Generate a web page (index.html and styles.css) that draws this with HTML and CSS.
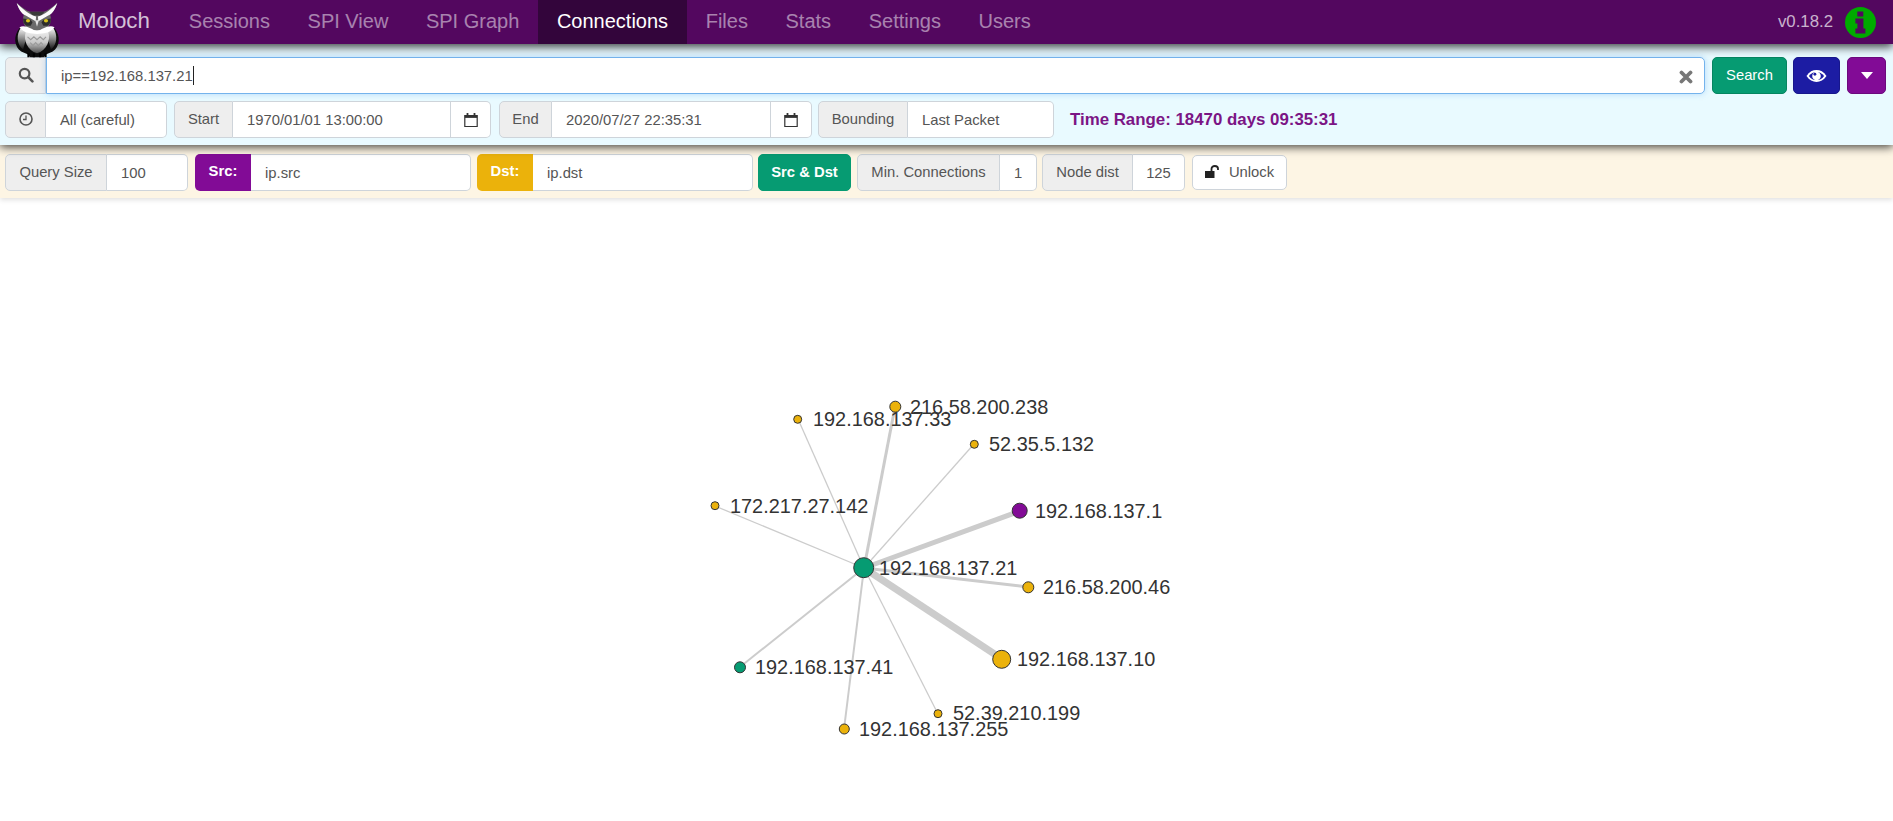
FILE: index.html
```html
<!DOCTYPE html>
<html lang="en">
<head>
<meta charset="utf-8">
<title>Moloch - Connections</title>
<link rel="stylesheet" href="styles.css">
</head>
<body>
<header class="navbar">
  <svg class="owl" viewBox="0 0 60 60" aria-hidden="true">
    <defs>
      <linearGradient id="belly" x1="0" y1="0" x2="0" y2="1"><stop offset="0" stop-color="#f6f6f6"/><stop offset=".55" stop-color="#c8c8c8"/><stop offset="1" stop-color="#4a4a4a"/></linearGradient>
      <linearGradient id="wing" x1="0" y1="0" x2="0" y2="1"><stop offset="0" stop-color="#fff"/><stop offset=".45" stop-color="#999"/><stop offset="1" stop-color="#161616"/></linearGradient>
    </defs>
    <g transform="translate(-.45 0) scale(.9 .97)">
      <path d="M11 29C4 37 5 48 13 53L20 56 23 59H38L41 56 48 53C56 48 57 37 50 29Z" fill="#0c0c0c"/>
      <path d="M13 28C7 35 8 46 15 51L19 38 23 32ZM48 28C54 35 53 46 46 51L42 38 38 32Z" fill="url(#wing)"/>
      <path d="M18 33C25 29 36 29 43 33 46 42 41 52 30.500 55 20 52 15 42 18 33Z" fill="url(#belly)"/>
      <path d="M20 38l3.500 3 3.500-3 3.500 3 3.500-3 3.500 3 3-3M23 44l3 3 3-3 3 3 3-3 2 2" fill="none" stroke="#9a9a9a" stroke-width="1.200"/>
      <path d="M8 3C10 9 13 13 16 15 14 20 15 25 19 29 26 32 35 32 42 29 46 25 47 20 45 15 48 13 51 9 53 3 47 8 42 11 38 12H23C19 11 14 8 8 3Z" fill="#6a6a6a"/>
      <path d="M22 12h17l-4 4h-9z" fill="#3a3a3a"/>
      <path d="M8 3C10 9 13 14 18 16L29 22 29.500 17C22 15 14 9 8 3ZM53 3C51 9 48 14 43 16L32 22 31.500 17C39 15 47 9 53 3Z" fill="#fbfbfb"/>
      <path d="M11 28C18 25 25 31 30.500 32 36 31 43 25 50 28 44 35 37 34 30.500 35 24 34 17 35 11 28Z" fill="#fff"/>
      <path d="M15 19l8 1 2.500 3-2 3.500h-5l-3-3z" fill="#2e2e2e"/><path d="M46 19l-8 1-2.500 3 2 3.500h5l3-3z" fill="#2e2e2e"/>
      <ellipse cx="20.500" cy="21.500" rx="2.300" ry="1.800" fill="#d9c41c"/><ellipse cx="40.500" cy="21.500" rx="2.300" ry="1.800" fill="#d9c41c"/>
      <path d="M28.500 21L30.500 27.500 32.500 21Z" fill="#e6e6e6"/>
      <path d="M21 55v4M27 55v4M34 55v4M40 55v4" stroke="#000" stroke-width="2.400"/>
    </g>
  </svg>
  <nav class="nav-items">
    <a class="brand">Moloch</a>
    <a class="nav-link">Sessions</a>
    <a class="nav-link">SPI View</a>
    <a class="nav-link">SPI Graph</a>
    <a class="nav-link active">Connections</a>
    <a class="nav-link">Files</a>
    <a class="nav-link">Stats</a>
    <a class="nav-link">Settings</a>
    <a class="nav-link">Users</a>
  </nav>
  <span class="version">v0.18.2</span>
  <span class="info-badge">
    <svg viewBox="0 0 31 31" aria-hidden="true"><circle cx="15.500" cy="15.500" r="15.500" fill="#00aa00"/><path d="M12.300 4.500h6v5h-6zM10.400 11.500h8v10h2v5h-10v-5h2v-5h-2z" fill="#53075f"/></svg>
  </span>
</header>

<section class="search-panel">
  <div class="row">
    <div class="group grow">
      <span class="addon w-search">
        <svg class="icon" viewBox="0 0 16 16" aria-hidden="true"><circle cx="6.600" cy="6.600" r="4.800" fill="none" stroke="#555" stroke-width="2.200"/><path d="M10.200 10.200l4.200 4.200" stroke="#555" stroke-width="2.600" stroke-linecap="round"/></svg>
      </span>
      <div class="field focus grow spread">
        <span class="query">ip==192.168.137.21<i class="caret-bar"></i></span>
        <svg class="clear" viewBox="0 0 14 14" aria-hidden="true"><path d="M2.500 2.500l9 9M11.500 2.500l-9 9" stroke="#777" stroke-width="3.800" stroke-linecap="round"/></svg>
      </div>
    </div>
    <button class="btn btn-green w-go">Search</button>
    <button class="btn btn-blue w-eye">
      <svg viewBox="0 0 22 14" width="21" height="14" aria-hidden="true"><path d="M.5 7C3.500 2.500 7 .8 11 .8S18.500 2.500 21.500 7C18.500 11.500 15 13.200 11 13.200S3.500 11.500 .5 7Z" fill="#fff"/><path d="M3 7C5.300 3.900 8 2.700 11 2.700S16.700 3.900 19 7C16.700 10.100 14 11.300 11 11.300S5.300 10.100 3 7Z" fill="#1c1ca3"/><circle cx="11" cy="7" r="4.500" fill="#fff"/><circle cx="9.300" cy="5.200" r="1.500" fill="#1c1ca3"/></svg>
    </button>
    <button class="btn btn-purple w-more">
      <svg viewBox="0 0 12 7" width="12" height="7" aria-hidden="true"><path d="M0 0h12L6 7z" fill="#fff"/></svg>
    </button>
  </div>
  <div class="row">
    <div class="group">
      <span class="addon w-clock">
        <svg class="icon" viewBox="0 0 16 16" aria-hidden="true"><circle cx="8" cy="8" r="6" fill="none" stroke="#555" stroke-width="1.600"/><path d="M8 4.500V8.500H5" fill="none" stroke="#555" stroke-width="1.300"/></svg>
      </span>
      <div class="field w-all">All (careful)</div>
    </div>
    <div class="group s1">
      <span class="addon w-start">Start</span>
      <div class="field w-date square">1970/01/01 13:00:00</div>
      <span class="cal">
        <svg class="icon" viewBox="0 0 16 16" aria-hidden="true"><path d="M1.800 3.500h12.400v11H1.800z" fill="none" stroke="#333" stroke-width="1.200"/><path d="M1.800 3.500h12.400v2.400H1.800z" fill="#333"/><path d="M4.500 1v3.500M11.500 1v3.500" stroke="#333" stroke-width="1.800"/></svg>
      </span>
    </div>
    <div class="group s2">
      <span class="addon w-end">End</span>
      <div class="field w-date2 square">2020/07/27 22:35:31</div>
      <span class="cal wide">
        <svg class="icon" viewBox="0 0 16 16" aria-hidden="true"><path d="M1.800 3.500h12.400v11H1.800z" fill="none" stroke="#333" stroke-width="1.200"/><path d="M1.800 3.500h12.400v2.400H1.800z" fill="#333"/><path d="M4.500 1v3.500M11.500 1v3.500" stroke="#333" stroke-width="1.800"/></svg>
      </span>
    </div>
    <div class="group">
      <span class="addon w-bound">Bounding</span>
      <div class="field w-last">Last Packet</div>
    </div>
    <strong class="time-range">Time Range: 18470 days 09:35:31</strong>
  </div>
</section>

<section class="options-panel">
  <div class="row">
    <div class="group">
      <span class="addon w-qs">Query Size</span>
      <div class="field w-100">100</div>
    </div>
    <div class="group s1">
      <span class="addon addon-src w-tag">Src:</span>
      <div class="field w-srcf">ip.src</div>
    </div>
    <div class="group s0b">
      <span class="addon addon-dst w-tag">Dst:</span>
      <div class="field w-dstf">ip.dst</div>
    </div>
    <button class="btn btn-green btn-bold w-both s0">Src &amp; Dst</button>
    <div class="group">
      <span class="addon w-min">Min. Connections</span>
      <div class="field w-one">1</div>
    </div>
    <div class="group s0">
      <span class="addon w-nd">Node dist</span>
      <div class="field w-125">125</div>
    </div>
    <button class="btn btn-white w-unlock s1">
      <svg viewBox="0 0 15 13" width="15" height="13" aria-hidden="true"><path d="M0 6h9.500v7H0z" fill="#222"/><path d="M6.500 6.500V3.800C6.500 2 8 1 9.800 1S13 2 13 3.800V5" fill="none" stroke="#222" stroke-width="1.800"/></svg>
      Unlock
    </button>
  </div>
</section>

<main class="graph-wrap">
  <svg class="graph" viewBox="0 198 1893 623" role="img" aria-label="Connections graph">
    <g class="links">
      <line class="l1" x1="864" y1="568" x2="798" y2="419"/>
      <line class="l3" x1="864" y1="568" x2="895" y2="407"/>
      <line class="l1" x1="864" y1="568" x2="974" y2="444"/>
      <line class="l1" x1="864" y1="568" x2="715" y2="506"/>
      <line class="l5" x1="864" y1="568" x2="1020" y2="511"/>
      <line class="l3" x1="864" y1="568" x2="1028" y2="587"/>
      <line class="l6" x1="864" y1="568" x2="1002" y2="659"/>
      <line class="l2" x1="864" y1="568" x2="740" y2="667"/>
      <line class="l1" x1="864" y1="568" x2="938" y2="714"/>
      <line class="l2" x1="864" y1="568" x2="844" y2="729"/>
    </g>
    <g class="nodes">
      <circle class="gold" cx="797.700" cy="419.300" r="4"/>
      <circle class="gold" cx="895.300" cy="406.700" r="5.500"/>
      <circle class="gold" cx="974.300" cy="444.300" r="4"/>
      <circle class="gold" cx="715" cy="505.700" r="4"/>
      <circle class="purple" cx="1019.700" cy="510.700" r="7.500"/>
      <circle class="green" cx="863.700" cy="567.700" r="10"/>
      <circle class="gold" cx="1028.300" cy="587.300" r="5.500"/>
      <circle class="gold" cx="1001.700" cy="659.300" r="9"/>
      <circle class="green" cx="740" cy="667.300" r="5.500"/>
      <circle class="gold" cx="938" cy="713.700" r="4"/>
      <circle class="gold" cx="844.300" cy="729" r="5"/>
    </g>
    <g class="labels">
      <text x="813" y="426">192.168.137.33</text>
      <text x="910" y="414">216.58.200.238</text>
      <text x="989" y="451">52.35.5.132</text>
      <text x="730" y="513">172.217.27.142</text>
      <text x="1035" y="518">192.168.137.1</text>
      <text x="879" y="575">192.168.137.21</text>
      <text x="1043" y="594">216.58.200.46</text>
      <text x="1017" y="666">192.168.137.10</text>
      <text x="755" y="674">192.168.137.41</text>
      <text x="953" y="720">52.39.210.199</text>
      <text x="859" y="736">192.168.137.255</text>
    </g>
  </svg>
</main>
</body>
</html>
```
FILE: styles.css
```css
* { box-sizing: border-box; }
html, body { margin: 0; padding: 0; height: 100%; overflow: hidden; background: #fff; }
body { font-family: "Liberation Sans", Arial, sans-serif; font-size: 14.800px; color: #555; }

.navbar {
  position: relative;
  z-index: 3;
  height: 44px;
  display: flex;
  align-items: center;
  background: #53075f;
  box-shadow: 0 3px 9px rgba(0, 0, 0, .75);
  padding-left: 78px;
  padding-right: 17px;
}
.owl { position: absolute; left: 10px; top: 0; width: 60px; height: 60px; z-index: 5; }
.nav-items { display: flex; align-items: stretch; height: 44px; flex: 1; }
.brand { font-size: 22.300px; line-height: 42px; color: rgba(255, 255, 255, .75); margin-right: 20px; width: 72px; white-space: nowrap; }
.nav-link { font-size: 20px; line-height: 42px; padding: 0 18.800px; color: rgba(255, 255, 255, .5); white-space: nowrap; }
.nav-link.active { color: #fff; background: #33053b; }
.version { font-size: 16.800px; color: rgba(255, 255, 255, .7); margin-right: 12px; }
.info-badge { display: flex; width: 31px; height: 31px; }
.info-badge svg { width: 31px; height: 31px; }

.search-panel {
  position: relative;
  z-index: 2;
  height: 101px;
  background: #e9faff;
  box-shadow: 0 2px 9px rgba(0, 0, 0, .75);
  padding: 13px 7px 0 5px;
  display: flex;
  flex-direction: column;
  gap: 7px;
}
.options-panel {
  position: relative;
  z-index: 1;
  height: 53px;
  background: #fdf5e4;
  box-shadow: 0 2px 5px rgba(0, 0, 0, .12);
  padding: 9px 5px 0;
}
.row { display: flex; align-items: stretch; height: 37px; gap: 6px; }
.group { display: flex; align-items: stretch; }
.grow { flex: 1; }
.s0 { margin-left: -1px; }
.s0b { margin-left: 0; }
.s1 { margin-left: 1px; }
.s2 { margin-left: 2px; }

.addon {
  display: flex;
  align-items: center;
  justify-content: center;
  padding-bottom: 2px;
  background: #eee;
  border: 1px solid #ced4da;
  border-radius: 5px 0 0 5px;
  white-space: nowrap;
}
.addon-src, .addon-dst { color: #fff; font-weight: 700; border: 0; padding-bottom: 3px; }
.addon-src { background: #820b96; }
.addon-dst { background: #ebb20b; }
.field {
  display: flex;
  align-items: center;
  padding-left: 14px;
  background: #fff;
  border: 1px solid #ced4da;
  border-left: 0;
  border-radius: 0 5px 5px 0;
  white-space: nowrap;
}
.field.square { border-radius: 0; }
.field.focus { border: 1px solid #74b3ec; border-radius: 0 5px 5px 0; box-shadow: 0 0 6px rgba(80, 160, 240, .35); padding-right: 10px; }
.spread { justify-content: space-between; }
.caret-bar { display: inline-block; width: 1px; height: 19px; background: #222; vertical-align: -4px; }
.clear { width: 14px; height: 14px; margin-top: 2px; margin-right: 1px; }
.cal {
  display: flex;
  align-items: center;
  justify-content: center;
  width: 40px;
  background: #fff;
  border: 1px solid #ced4da;
  border-left: 0;
  border-radius: 0 5px 5px 0;
}
.cal.wide { width: 41px; }
.icon { width: 16px; height: 16px; }

.btn {
  display: flex;
  align-items: center;
  justify-content: center;
  font-family: inherit;
  font-size: 14.800px;
  padding: 0 0 2px;
  border-radius: 5px;
  border: 1px solid transparent;
  color: #fff;
  white-space: nowrap;
}
.btn-green { background: #069b72; border-color: #058560; }
.btn-blue { background: #1c1ca3; border-color: #17178c; padding: 0; }
.btn-purple { background: #820b96; border-color: #6c097d; padding: 0; }
.btn-bold { font-weight: 700; border-color: #069b72; }
.btn-white { background: #fff; border-color: #ced4da; color: #555; gap: 9px; margin-top: 1px; margin-bottom: 1px; height: 35px; }

.w-search { width: 41px; }
.w-go { width: 75px; margin-left: 1px; }
.w-eye { width: 47px; }
.w-more { width: 39px; margin-left: 1px; }
.w-clock { width: 41px; }
.w-all { width: 121px; }
.w-start { width: 59px; }
.w-date { width: 218px; }
.w-end { width: 53px; }
.w-date2 { width: 219px; }
.w-bound { width: 90px; }
.w-last { width: 146px; }
.w-qs { width: 102px; }
.w-100 { width: 81px; }
.w-tag { width: 56px; }
.w-srcf { width: 220px; }
.w-dstf { width: 220px; }
.w-both { width: 93px; }
.w-min { width: 143px; }
.w-one { width: 37px; padding-left: 0; justify-content: center; }
.w-nd { width: 91px; }
.w-125 { width: 52px; padding-left: 0; justify-content: center; }
.w-unlock { width: 95px; }

.time-range { align-self: center; margin-left: 10px; font-size: 16.850px; color: #7b1585; white-space: nowrap; }

.graph-wrap { height: 623px; }
.graph { display: block; width: 1893px; height: 623px; }
.links line { stroke: #ccc; }
.l1 { stroke-width: 1.300px; }
.l2 { stroke-width: 2px; }
.l3 { stroke-width: 3px; }
.l5 { stroke-width: 5px; }
.l6 { stroke-width: 7px; }
.nodes circle { stroke: #333; stroke-width: 1px; }
.gold { fill: #ebb20b; }
.purple { fill: #820b96; }
.green { fill: #069b72; }
.labels text { font-family: "Liberation Sans", Arial, sans-serif; font-size: 19.900px; fill: #333; }
```
